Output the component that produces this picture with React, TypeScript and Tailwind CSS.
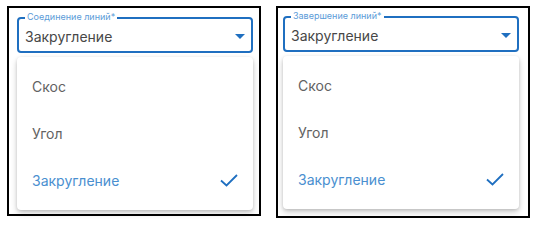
const options = ['Скос', 'Угол', 'Закругление'];

function SelectPanel({ label, value, className }: { label: string; value: string; className: string }) {
  return (
    <div className={`border-2 border-black bg-white ${className}`}>
      <div className="relative h-[36px] w-[236px] rounded-[4px] border-2 border-[#1f6fc0]">
        <span className="absolute -top-[8px] left-[6px] bg-white px-[2px] text-[9px] leading-[12px] text-[#5b9bd8]">
          {label}*
        </span>
        <div className="flex h-full items-center justify-between pl-[6px] pr-[6px] pt-[2px]">
          <span className="text-[14px] text-[#474747]">{value}</span>
          <svg width="10" height="5" viewBox="0 0 10 5" className="mt-[1px]">
            <path d="M0 0 L10 0 L5 5 Z" fill="#1f6fc0" />
          </svg>
        </div>
      </div>
      <div className="mt-[4px] w-[236px] rounded-[4px] bg-white py-[6px] shadow-[0_3px_6px_rgba(0,0,0,0.2),0_1px_3px_rgba(0,0,0,0.12)]">
        {options.map((opt) => {
          const selected = opt === value;
          return (
            <div key={opt} className="flex h-[47px] items-center justify-between pl-[15px] pr-[15px]">
              <span className={`text-[14px] ${selected ? 'text-[#4a8fd0]' : 'text-[#626262]'}`}>{opt}</span>
              {selected && (
                <svg width="18" height="13" viewBox="0 0 18 13" fill="none">
                  <path d="M1 6.5 L6.5 11.5 L17 1" stroke="#1f6fc0" strokeWidth="1.8" />
                </svg>
              )}
            </div>
          );
        })}
      </div>
    </div>
  );
}

export default function App() {
  return (
    <div className="flex h-[223px] w-[541px] items-start bg-white font-['Inter',sans-serif]">
      <SelectPanel label="Соединение линий" value="Закругление" className="ml-[7px] mt-[6px] h-[210px] w-[254px] pl-[8px] pt-[9px]" />
      <SelectPanel label="Завершение линий" value="Закругление" className="ml-[15px] mt-[6px] h-[212px] w-[254px] pl-[5px] pt-[8px]" />
    </div>
  );
}
